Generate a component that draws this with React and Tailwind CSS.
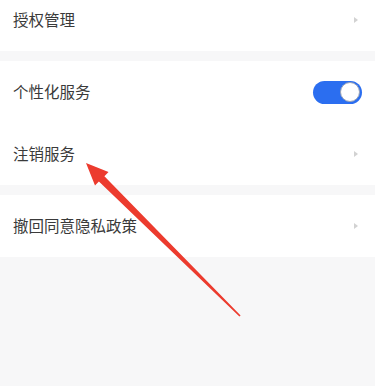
import React from "react";

function Chevron() {
  return (
    <svg width="6" height="8" viewBox="0 0 6 8" className="mr-[3px]">
      <path d="M1 1 L5 4 L1 7 Z" fill="#d2d2d2" />
    </svg>
  );
}

function Row({ label, right }) {
  return (
    <div className="flex h-[62px] items-center justify-between pl-[13px] pr-[13px]">
      <span className="text-[15.5px] text-[#3a3a3a] leading-none">{label}</span>
      {right}
    </div>
  );
}

function Toggle() {
  return (
    <div className="flex h-[23px] w-[49px] items-center justify-end rounded-full bg-[#2b6ef0] p-[2px]">
      <div className="h-[20px] w-[20px] rounded-full border border-[#9aa3b5] bg-white" />
    </div>
  );
}

export default function App() {
  return (
    <div
      className="relative h-[386px] w-[375px] overflow-hidden bg-[#f7f7f8]"
      style={{ fontFamily: '"Noto Sans CJK SC", "Noto Sans", sans-serif' }}
    >
      <div className="-mt-[11px] bg-white">
        <Row label="授权管理" right={<Chevron />} />
      </div>
      <div className="mt-[10px] bg-white">
        <Row label="个性化服务" right={<Toggle />} />
        <Row label="注销服务" right={<Chevron />} />
      </div>
      <div className="mt-[10px] bg-white">
        <Row label="撤回同意隐私政策" right={<Chevron />} />
      </div>
      <svg
        className="pointer-events-none absolute left-0 top-0"
        width="375"
        height="386"
        viewBox="0 0 375 386"
      >
        <polygon
          points="86,163 108.5,172 104.4,176.3 240.6,315.4 239.4,316.6 98.9,181.4 95,185.5"
          fill="#ec3b2e"
        />
      </svg>
    </div>
  );
}
